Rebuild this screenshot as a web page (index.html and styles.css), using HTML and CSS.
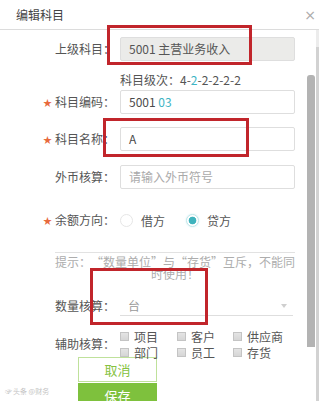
FILE: index.html
```html
<!DOCTYPE html>
<html lang="zh-CN">
<head>
    <meta charset="UTF-8" name="viewport" content="width=device-width, initial-scale=1.0"/>
    <title>编辑科目</title>
    <link rel="stylesheet" href="styles.css">
</head>
<body>
<div class="dialog">
    <div class="head">
        <span class="title">编辑科目</span>
        <span class="close">×</span>
    </div>
    <div class="body">
        <div class="form">
            <div class="row">
                <span class="lbl">上级科目：</span>
                <div class="field disabled">5001 主营业务收入</div>
            </div>
            <div class="level">科目级次：4-<span class="hl">2</span>-2-2-2-2</div>
            <div class="row r-code">
                <span class="lbl"><i class="star">★</i>科目编码：</span>
                <div class="field">5001 <span class="hl">03</span></div>
            </div>
            <div class="row r-name">
                <span class="lbl"><i class="star">★</i>科目名称：</span>
                <div class="field">A</div>
            </div>
            <div class="row r-cur">
                <span class="lbl">外币核算：</span>
                <div class="field placeholder">请输入外币符号</div>
            </div>
            <div class="row r-dir">
                <span class="lbl"><i class="star">★</i>余额方向：</span>
                <div class="radios">
                    <span class="radio"></span><span class="rtxt">借方</span>
                    <span class="radio on"></span><span class="rtxt">贷方</span>
                </div>
            </div>
            <div class="divider"></div>
            <p class="hint">提示：<span class="q ql">“</span>数量单位<span class="q">”</span>与<span class="q ql">“</span>存货<span class="q">”</span>互斥，不能同<br>时使用！</p>
            <div class="row r-qty">
                <span class="lbl">数量核算：</span>
                <div class="select">台<span class="arrow"></span></div>
            </div>
            <div class="row r-aux">
                <span class="lbl">辅助核算：</span>
                <div class="checks">
                    <span class="ck"><i class="box"></i>项目</span>
                    <span class="ck"><i class="box"></i>客户</span>
                    <span class="ck"><i class="box"></i>供应商</span>
                    <span class="ck"><i class="box"></i>部门</span>
                    <span class="ck"><i class="box"></i>员工</span>
                    <span class="ck"><i class="box"></i>存货</span>
                </div>
            </div>
            <div class="btns">
                <div class="btn cancel">取消</div>
                <div class="btn save">保存</div>
            </div>
        </div>
        <div class="rail">
            <div class="thumb"></div>
            <div class="line"></div>
        </div>
    </div>

    <!-- annotation boxes -->
    <div class="mark m1"></div>
    <div class="mark m2"></div>
    <div class="mark m3"></div>

    <div class="watermark"><span class="wm-icon">☞</span>头条 @财务</div>
</div>
</body>
</html>
```

FILE: styles.css
```css
body {
    margin: 0;
    background: #fff;
    font-family: "Noto Sans CJK SC", "Noto Sans", sans-serif;
    font-size: 12px;
    color: #555;
    text-spacing-trim: space-all;
}
.dialog {
    width: 321px;
    height: 401px;
    position: relative;
    overflow: hidden;
}
.head {
    height: 29px;
    border-bottom: 1px solid #dcdcdc;
    width: 319px;
    display: flex;
    justify-content: space-between;
    align-items: center;
}
.title {
    padding-left: 16px;
    color: #444;
    font-size: 12px;
}
.close {
    color: #aaa;
    font-size: 14px;
    margin-right: 3px;
    font-family: "DejaVu Sans", sans-serif;
}
.body {
    display: flex;
    height: 371px;
}
.form {
    width: 307px;
    padding-top: 7px;
    overflow: hidden;
}
.row {
    display: flex;
    align-items: center;
    height: 24px;
}
.lbl {
    width: 115px;
    margin-right: 5px;
    text-align: right;
    flex-shrink: 0;
    color: #555;
    line-height: 16px;
}
.star {
    font-style: normal;
    color: #e8693c;
    font-size: 9px;
    margin-right: 3px;
    vertical-align: 1px;
}
.field {
    width: 175px;
    height: 24px;
    box-sizing: border-box;
    border: 1px solid #dedede;
    border-radius: 2px;
    padding-left: 8px;
    line-height: 22px;
    color: #4a4a4a;
}
.field.disabled {
    background: #ebebe9;
    color: #555;
}
.field.placeholder {
    color: #aaa;
}
.hl {
    color: #3db4c4;
}
.level {
    margin: 10px 0 0 120px;
    height: 18px;
    line-height: 18px;
    color: #555;
}
.r-code { margin-top: 1px; }
.r-name { margin-top: 13px; }
.r-cur { margin-top: 14px; }
.r-dir { margin-top: 19px; }
.radios {
    display: flex;
    align-items: center;
}
.radio {
    width: 13px;
    height: 13px;
    box-sizing: border-box;
    border: 1px solid #e6e6e6;
    border-radius: 50%;
    margin-right: 8px;
}
.radio.on {
    border-color: #bfe5e9;
    box-shadow: 0 0 2px #cdeef1;
    background: radial-gradient(circle, #3fb3bd 0 3.5px, #fff 4.2px);
}
.rtxt {
    margin-right: 21px;
    color: #555;
}
.divider {
    margin: 20px 0 0 55px;
    width: 240px;
    height: 1px;
    background: #e2e2e2;
}
.hint {
    margin: 3px 0 0 55px;
    width: 240px;
    text-align: center;
    line-height: 12px;
    color: #adadad;
    white-space: nowrap;
}
.q {
    display: inline-block;
    width: 12px;
    text-align: left;
}
.q.ql {
    text-align: right;
}
.r-qty {
    margin-top: 16px;
    height: 20px;
}
.select {
    width: 173px;
    height: 20px;
    box-sizing: border-box;
    border-bottom: 1px solid #dedede;
    padding-left: 8px;
    line-height: 19px;
    color: #999;
    display: flex;
    justify-content: space-between;
    align-items: center;
}
.arrow {
    margin-right: 6px;
    border-top: 4px solid #cfcfcf;
    border-left: 3px solid transparent;
    border-right: 3px solid transparent;
}
.r-aux {
    margin-top: 12px;
    height: 32px;
}
.checks {
    display: grid;
    grid-template-columns: 57px 56px auto;
    grid-auto-rows: 16px;
}
.ck {
    display: flex;
    align-items: center;
    color: #555;
}
.box {
    width: 9px;
    height: 9px;
    box-sizing: border-box;
    border: 1px solid #c4c4c4;
    background: linear-gradient(#e4e4e4, #d6d6d6);
    margin-right: 5px;
}
.btns {
    margin: -3px 0 0 78px;
    width: 79px;
}
.btn {
    height: 25px;
    box-sizing: border-box;
    text-align: center;
    line-height: 23px;
    font-size: 13px;
}
.cancel {
    border: 1px solid #bfe19b;
    color: #86c23f;
    background: #fff;
}
.save {
    margin-top: 1px;
    border: 1px solid #7ec13d;
    background: #7ec13d;
    color: #fff;
}
.rail {
    width: 12px;
    display: flex;
}
.thumb {
    width: 8px;
    margin-top: 45px;
    height: 272px;
    background: #b3b3b3;
    border-radius: 3px 3px 0 0;
}
.line {
    width: 3px;
    margin-left: 1px;
    background: linear-gradient(#ececec 0 17px, #d2d2d2 17px);
}
.mark {
    position: absolute;
    border: 3px solid #c1252b;
    box-sizing: border-box;
}
.m1 { left: 107px; top: 25px; width: 145px; height: 40px; }
.m2 { left: 103px; top: 118px; width: 146px; height: 39px; }
.m3 { left: 90px; top: 268px; width: 118px; height: 57px; }
.watermark {
    position: absolute;
    left: 5px;
    top: 386px;
    font-size: 7px;
    color: #c4c4c4;
}
.wm-icon {
    margin-right: 1px;
}
```
